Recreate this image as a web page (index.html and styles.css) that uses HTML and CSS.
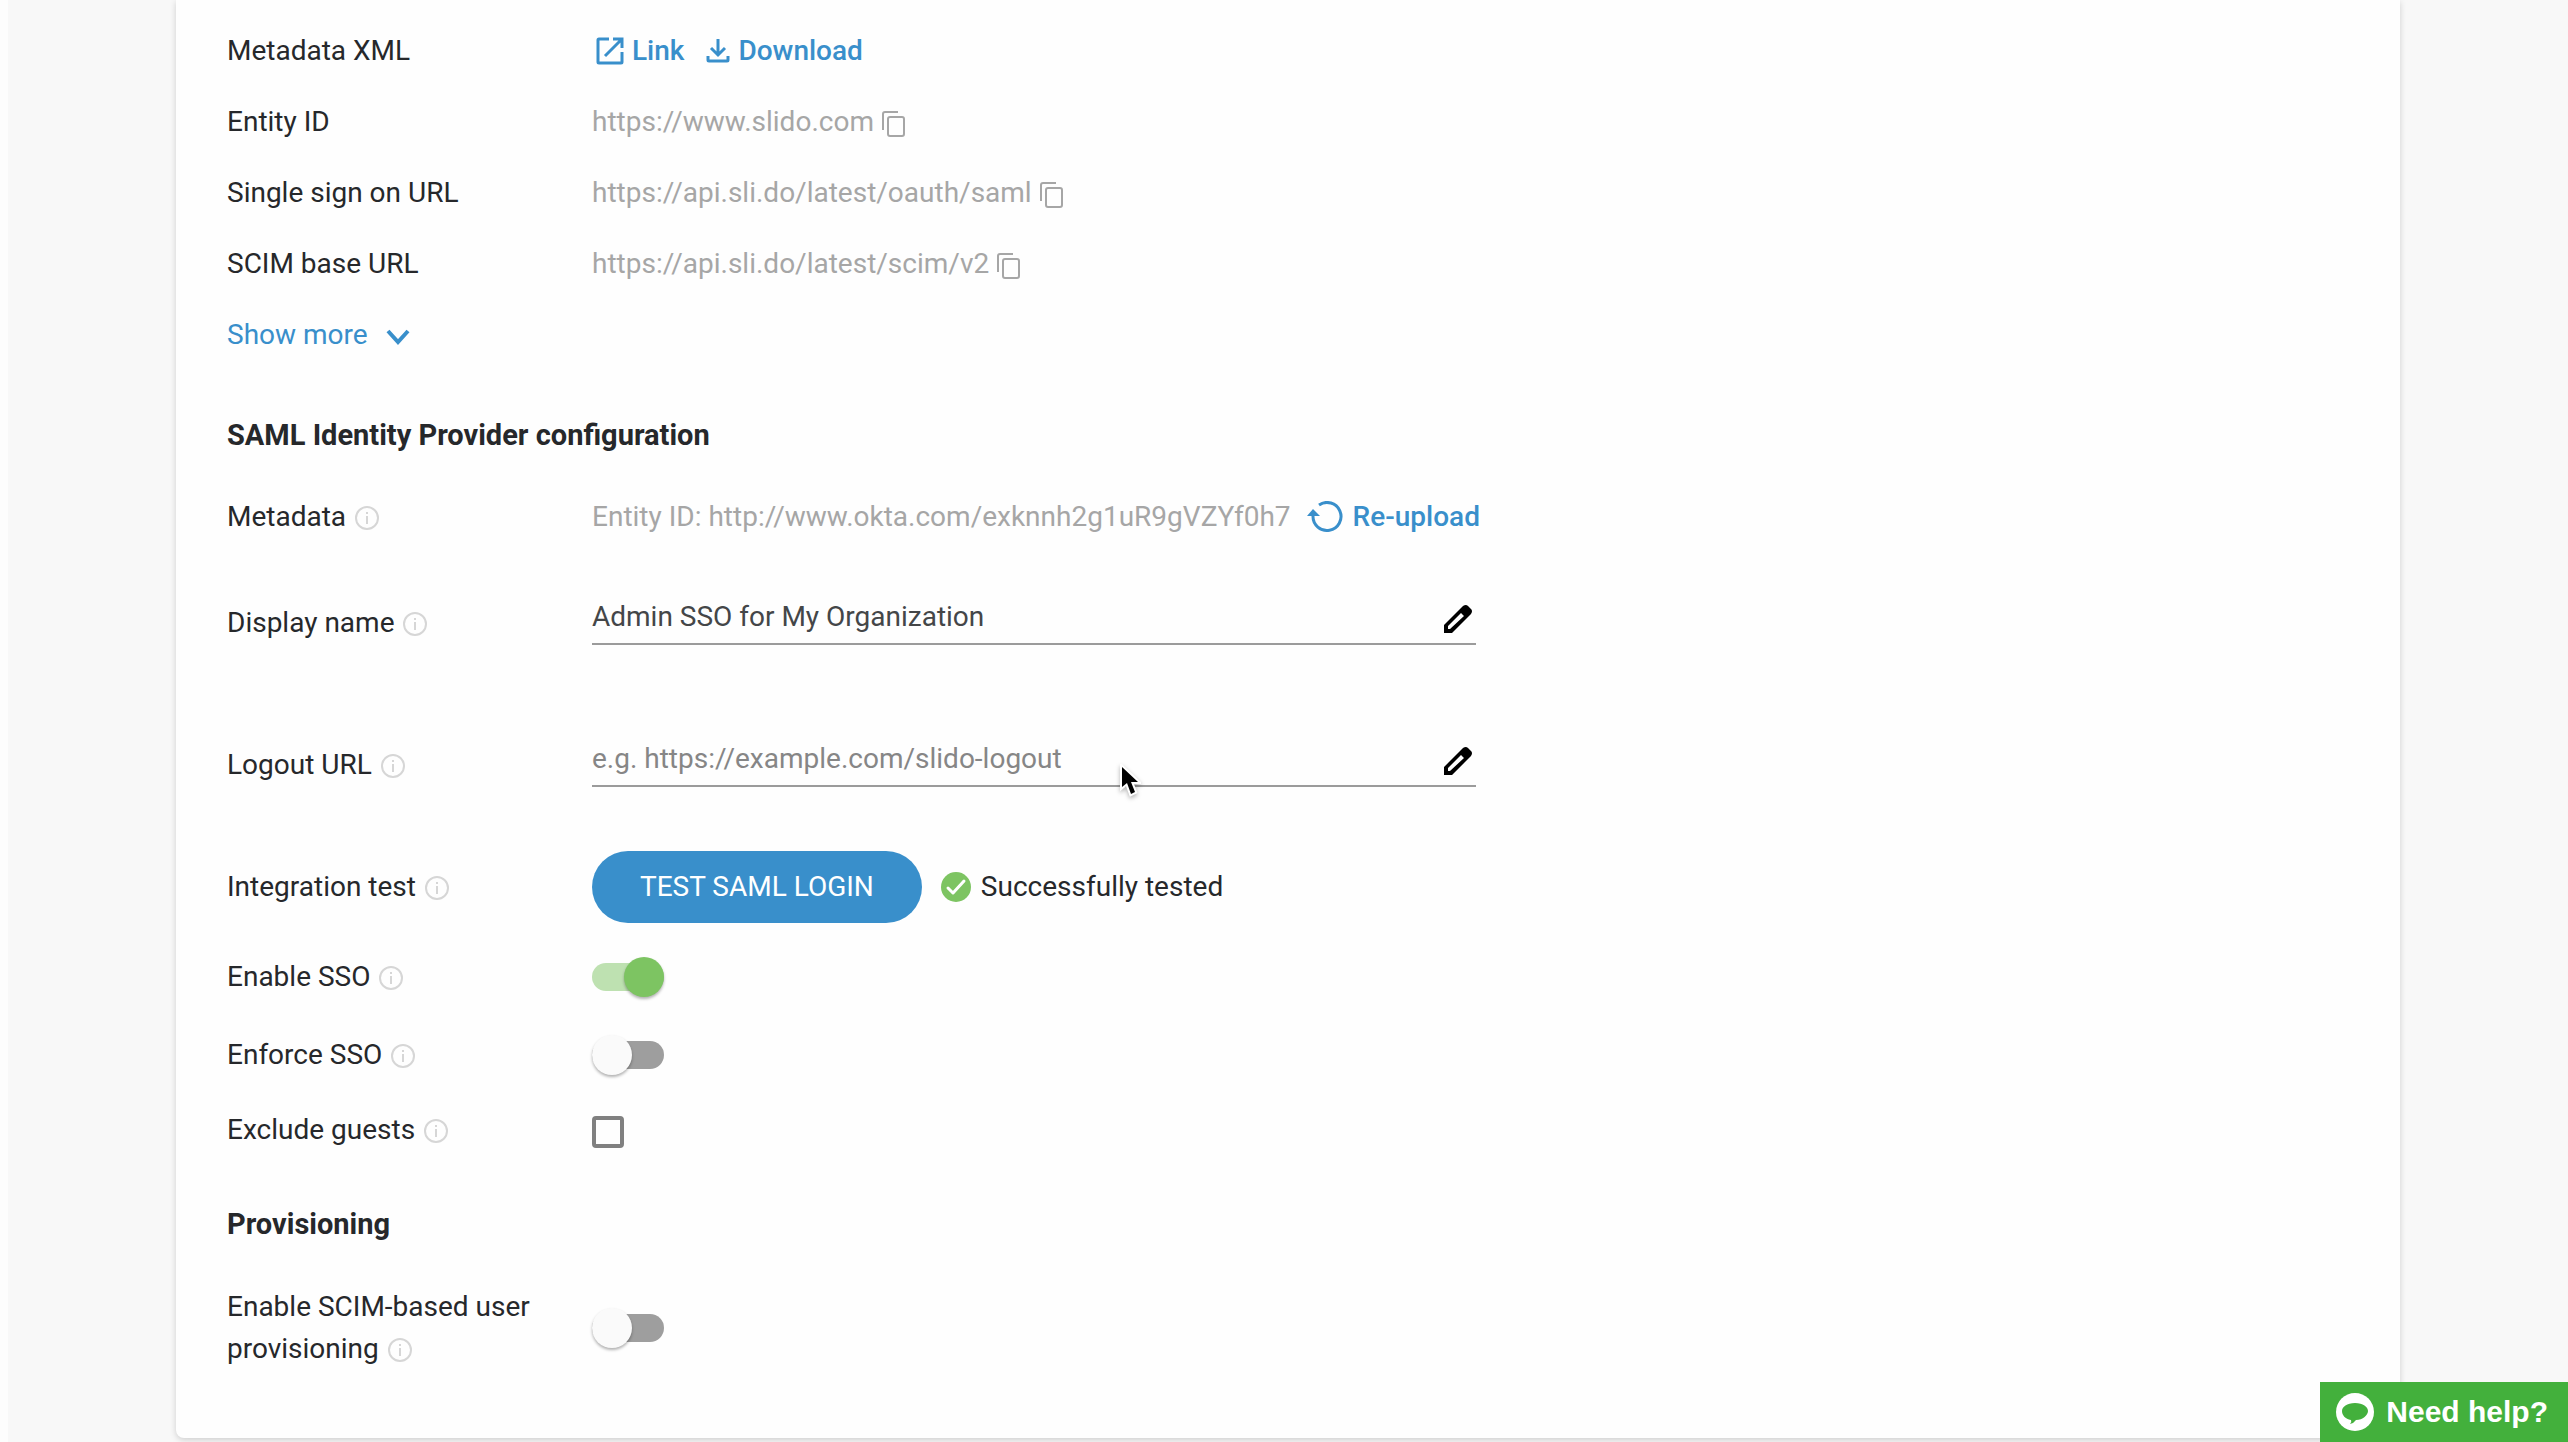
FILE: index.html
```html
<!DOCTYPE html>
<html lang="en">
  <head>
    <meta charset="UTF-8" />
    <meta name="viewport" content="width=device-width, initial-scale=1.0" />
    <title>SAML SSO</title>
    <link rel="stylesheet" href="styles.css">
  </head>
  <body>
    <!-- shared icons -->
    <svg class="sprite" width="0" height="0" aria-hidden="true">
      <symbol id="info" viewBox="0 0 24 24">
        <circle cx="12" cy="12" r="11" fill="none" stroke="currentColor" stroke-width="2" />
        <path fill="currentColor" d="M11 6h2v2h-2zM11 10h2v8h-2z" />
      </symbol>
      <symbol id="copy" viewBox="0 0 23 26">
        <path fill="none" stroke="currentColor" stroke-width="2" stroke-linejoin="round" d="M1 19V3q0-2 2-2h13M8 6h12q2 0 2 2v15q0 2-2 2H8q-2 0-2-2V8q0-2 2-2z" />
      </symbol>
      <symbol id="pencil" viewBox="0 0 28 28">
        <path fill="currentColor" fill-rule="evenodd" d="M0 28v-8L19 1q3-2 5 0l3 3q2 2 0 5L8 28zM4 24h2L20 11l-3-3L4 21z" />
      </symbol>
    </svg>

    <main class="card">
      <section class="service">
        <div class="row">
          <span class="label">Metadata XML</span>
          <div class="value links">
            <a href="#">
              <svg class="icon_link" viewBox="0 0 28 28" fill="none" stroke="currentColor" stroke-width="3"><path d="M13 2H3Q2 2 2 3v22q0 1 1 1h22q1 0 1-1V15M17 2h9v9M26 2L9 19" /></svg>
              Link
            </a>
            <a href="#">
              <svg class="icon_download" viewBox="0 0 24 24" fill="none" stroke="currentColor" stroke-width="3"><path d="M12 0v15M5 9l7 7 7-7M2 17v4q0 1 1 1h18q1 0 1-1v-4" /></svg>
              Download
            </a>
          </div>
        </div>
        <div class="row">
          <span class="label">Entity ID</span>
          <div class="value muted">https://www.slido.com <button class="copy" aria-label="Copy"><svg><use href="#copy" /></svg></button></div>
        </div>
        <div class="row">
          <span class="label">Single sign on URL</span>
          <div class="value muted">https://api.sli.do/latest/oauth/saml <button class="copy" aria-label="Copy"><svg><use href="#copy" /></svg></button></div>
        </div>
        <div class="row">
          <span class="label">SCIM base URL</span>
          <div class="value muted">https://api.sli.do/latest/scim/v2 <button class="copy" aria-label="Copy"><svg><use href="#copy" /></svg></button></div>
        </div>
        <button class="more">
          Show more
          <svg viewBox="0 0 24 16" fill="none" stroke="currentColor" stroke-width="4"><path d="M2 2l10 11L22 2" /></svg>
        </button>
      </section>

      <section class="provider">
        <h2>SAML Identity Provider configuration</h2>
        <div class="row metadata">
          <span class="label">Metadata <svg class="info"><use href="#info" /></svg></span>
          <div class="value muted">
            Entity ID: http://www.okta.com/exknnh2g1uR9gVZYf0h7
            <button class="reupload">
              <svg viewBox="0 0 36 32"><path fill="none" stroke="currentColor" stroke-width="3" d="M12 4A14 14 0 1 1 6 15" /><path fill="currentColor" d="M0 15l6-7 7 7z" /></svg>
              Re-upload
            </button>
          </div>
        </div>
        <div class="row field">
          <label class="label" for="display">Display name <svg class="info"><use href="#info" /></svg></label>
          <div class="value edit">
            <input type="text" id="display" value="Admin SSO for My Organization" />
            <button aria-label="Edit display name"><svg><use href="#pencil" /></svg></button>
          </div>
        </div>
        <div class="row field">
          <label class="label" for="logout">Logout URL <svg class="info"><use href="#info" /></svg></label>
          <div class="value edit">
            <input type="text" id="logout" placeholder="e.g. https://example.com/slido-logout" />
            <button aria-label="Edit logout URL"><svg><use href="#pencil" /></svg></button>
            <svg class="cursor" viewBox="0 0 22 36"><path fill="#000" stroke="#fff" stroke-width="4" paint-order="stroke" d="M3 3v20l5-4 4 11 4-2-4-10h7z" /></svg>
          </div>
        </div>
        <div class="row test">
          <span class="label">Integration test <svg class="info"><use href="#info" /></svg></span>
          <div class="value">
            <button class="test_button">TEST SAML LOGIN</button>
            <svg class="check" viewBox="0 0 30 30"><circle cx="15" cy="15" r="15" fill="#7dc462" /><path fill="none" stroke="#fff" stroke-width="3" stroke-linecap="round" stroke-linejoin="round" d="M7 16l5 5L23 9" /></svg>
            <span>Successfully tested</span>
          </div>
        </div>
        <div class="row toggle">
          <label class="label" for="enable">Enable SSO <svg class="info"><use href="#info" /></svg></label>
          <input type="checkbox" class="switch" id="enable" checked />
        </div>
        <div class="row toggle">
          <label class="label" for="enforce">Enforce SSO <svg class="info"><use href="#info" /></svg></label>
          <input type="checkbox" class="switch" id="enforce" />
        </div>
        <div class="row guests">
          <label class="label" for="guests">Exclude guests <svg class="info"><use href="#info" /></svg></label>
          <input type="checkbox" class="box" id="guests" />
        </div>
      </section>

      <section class="provisioning">
        <h2>Provisioning</h2>
        <div class="row scim">
          <label class="label" for="scim">Enable SCIM-based user provisioning <svg class="info"><use href="#info" /></svg></label>
          <input type="checkbox" class="switch" id="scim" />
        </div>
      </section>
    </main>

    <button class="help">
      <svg viewBox="0 0 38 38"><circle cx="19" cy="19" r="19" fill="#fff" /><path fill="#43b03c" d="M19 10c8 0 13 4 13 8s-5 9-12 9q-2 3-6 4 2-2 1-4C9 26 6 22 6 18c0-4 5-8 13-8z" /></svg>
      Need help?
    </button>
  </body>
</html>
```

FILE: styles.css
```css
* {
  box-sizing: border-box;
}

body {
  margin: 0;
  border-left: 8px solid #fdfdfd;
  background-color: #f8f8f8;
  min-height: 100vh;
  font-family: Roboto, sans-serif;
  font-size: 28px;
  line-height: 42px;
  color: #26282b;
}

button,
input {
  font: inherit;
  color: inherit;
  margin: 0;
  padding: 0;
  border: none;
  background: none;
}

button,
label {
  cursor: pointer;
}

.sprite {
  display: block;
}

.card {
  margin: 0 168px 4px;
  padding: 15px 51px 68px;
  background-color: #fefefe;
  border-radius: 0 0 8px 8px;
  box-shadow: 0 2px 6px rgba(0, 0, 0, 0.17);
}

.row {
  display: grid;
  grid-template-columns: 365px 1fr;
  align-items: center;
  min-height: 71px;
}

.value {
  display: flex;
  align-items: center;
}

.muted {
  color: #a6a6a6;
}

h2 {
  margin: 0;
  font-size: 29px;
  font-weight: 700;
}

/* service provider */
.links {
  gap: 22px;
}

.links a {
  display: flex;
  align-items: center;
  gap: 8px;
  color: #398fcb;
  font-weight: 500;
  text-decoration: none;
}

.icon_link {
  width: 28px;
  height: 28px;
  margin-left: 4px;
}

.icon_download {
  width: 24px;
  height: 24px;
}

.copy {
  display: flex;
  margin: 4px 0 0 8px;
}

.copy svg {
  width: 23px;
  height: 26px;
}

.more {
  display: flex;
  align-items: center;
  gap: 18px;
  min-height: 71px;
  color: #398fcb;
}

.more svg {
  width: 24px;
  height: 16px;
  margin-top: 4px;
}

/* identity provider */
.provider {
  padding-top: 44px;
}

.metadata {
  margin-top: 25px;
}

.info {
  width: 24px;
  height: 24px;
  margin-left: 2px;
  vertical-align: -4px;
  color: #d6d6d6;
}

.reupload {
  display: flex;
  align-items: center;
  gap: 10px;
  margin-left: 16px;
  color: #398fcb;
  font-weight: 500;
}

.reupload svg {
  width: 36px;
  height: 32px;
}

.field {
  min-height: 142px;
}

.edit {
  position: relative;
  width: 884px;
  height: 54px;
  margin-bottom: 10px;
  border-bottom: 2px solid #9b9b9b;
}

.edit input {
  flex: 1;
  outline: none;
  color: #444648;
}

.edit input::placeholder {
  color: #868686;
  opacity: 1;
}

.edit button {
  display: flex;
  margin: 4px 4px 0 0;
  color: #000;
}

.edit button svg {
  width: 28px;
  height: 28px;
}

.cursor {
  position: absolute;
  left: 527px;
  top: 31px;
  width: 22px;
  height: 36px;
  filter: drop-shadow(0 2px 2px rgba(0, 0, 0, 0.3));
}

.test {
  min-height: 102px;
}

.test_button {
  height: 72px;
  padding: 0 48px;
  border-radius: 36px;
  background-color: #398fcb;
  color: #fff;
}

.check {
  width: 30px;
  height: 30px;
  margin: 0 10px 0 19px;
}

.toggle {
  min-height: 78px;
}

.switch {
  appearance: none;
  display: flex;
  align-items: center;
  width: 72px;
  height: 28px;
  border-radius: 14px;
  background-color: #9e9e9e;
  cursor: pointer;
}

.switch::before {
  content: "";
  width: 40px;
  height: 40px;
  flex: none;
  border-radius: 50%;
  background-color: #fafafa;
  box-shadow: 0 2px 3px rgba(0, 0, 0, 0.3);
}

.switch:checked {
  justify-content: flex-end;
  background-color: #bee1b1;
}

.switch:checked::before {
  background-color: #7dc462;
}

.box {
  appearance: none;
  width: 32px;
  height: 32px;
  margin-top: 4px;
  border: 4px solid #808080;
  border-radius: 4px;
}

/* provisioning */
.provisioning {
  padding-top: 38px;
}

.scim {
  margin-top: 41px;
}

.help {
  position: fixed;
  right: 0;
  bottom: 0;
  display: flex;
  align-items: center;
  gap: 12px;
  height: 60px;
  padding: 0 20px 0 16px;
  background-color: #43b03c;
  color: #fff;
  font-family: "Liberation Sans", Arial, sans-serif;
  font-size: 30px;
  font-weight: 700;
}

.help svg {
  width: 38px;
  height: 38px;
}
```
